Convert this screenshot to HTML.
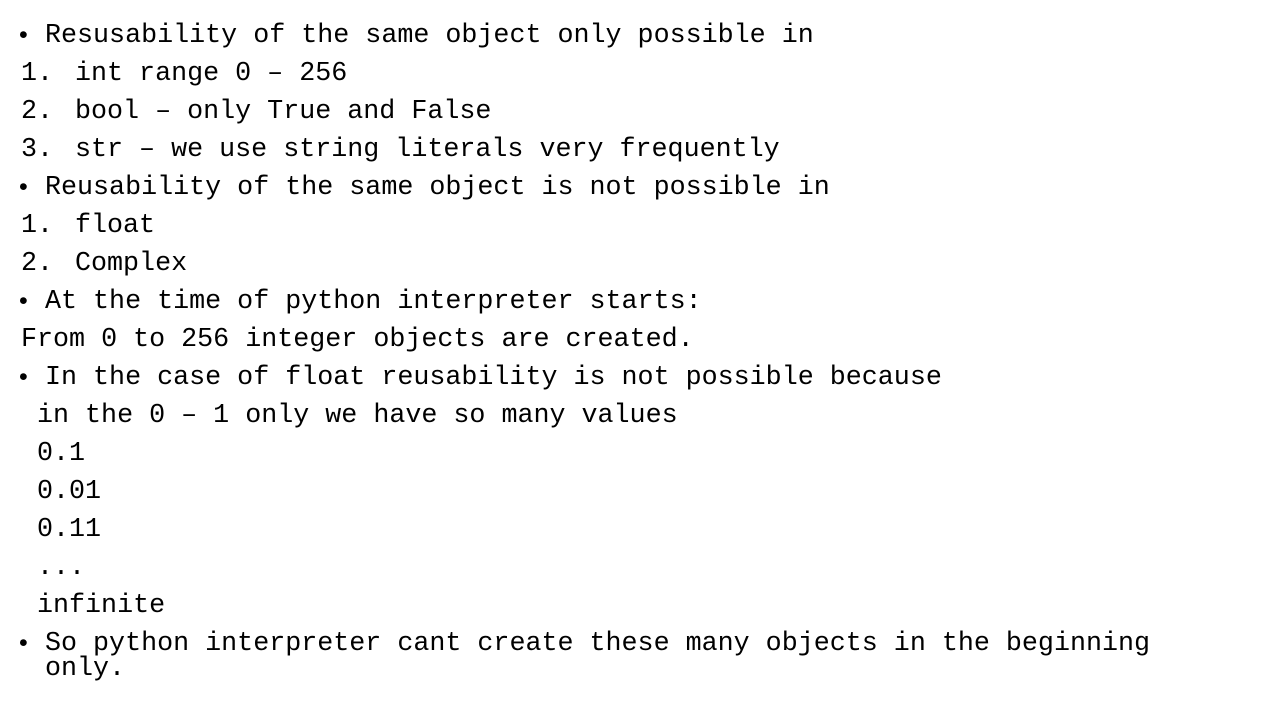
<!DOCTYPE html>
<html><head><meta charset="utf-8"><style>
body{margin:0;width:1280px;height:720px;background:#fff;overflow:hidden;position:relative;font-family:"Liberation Mono",monospace;font-size:26.7px;color:#000}
.l{position:absolute;white-space:pre;line-height:38px;height:38px}
.b{position:absolute;font-family:"Liberation Sans",sans-serif;font-size:25px;line-height:38px;margin-top:-1px}
</style></head><body>
<div class="b" style="left:19px;top:17px">•</div><div class="l" style="left:45px;top:17px">Resusability of the same object only possible in</div>
<div class="l" style="left:21px;top:55px">1.</div><div class="l" style="left:75px;top:55px">int range 0 – 256</div>
<div class="l" style="left:21px;top:93px">2.</div><div class="l" style="left:75px;top:93px">bool – only True and False</div>
<div class="l" style="left:21px;top:131px">3.</div><div class="l" style="left:75px;top:131px">str – we use string literals very frequently</div>
<div class="b" style="left:19px;top:169px">•</div><div class="l" style="left:45px;top:169px">Reusability of the same object is not possible in</div>
<div class="l" style="left:21px;top:207px">1.</div><div class="l" style="left:75px;top:207px">float</div>
<div class="l" style="left:21px;top:245px">2.</div><div class="l" style="left:75px;top:245px">Complex</div>
<div class="b" style="left:19px;top:283px">•</div><div class="l" style="left:45px;top:283px">At the time of python interpreter starts:</div>
<div class="l" style="left:21px;top:321px">From 0 to 256 integer objects are created.</div>
<div class="b" style="left:19px;top:359px">•</div><div class="l" style="left:45px;top:359px">In the case of float reusability is not possible because</div>
<div class="l" style="left:37px;top:397px">in the 0 – 1 only we have so many values</div>
<div class="l" style="left:37px;top:435px">0.1</div>
<div class="l" style="left:37px;top:473px">0.01</div>
<div class="l" style="left:37px;top:511px">0.11</div>
<div class="l" style="left:37px;top:549px">...</div>
<div class="l" style="left:37px;top:587px">infinite</div>
<div class="b" style="left:19px;top:625px">•</div><div class="l" style="left:45px;top:625px">So python interpreter cant create these many objects in the beginning</div>
<div class="l" style="left:45px;top:650px">only.</div>
</body></html>
